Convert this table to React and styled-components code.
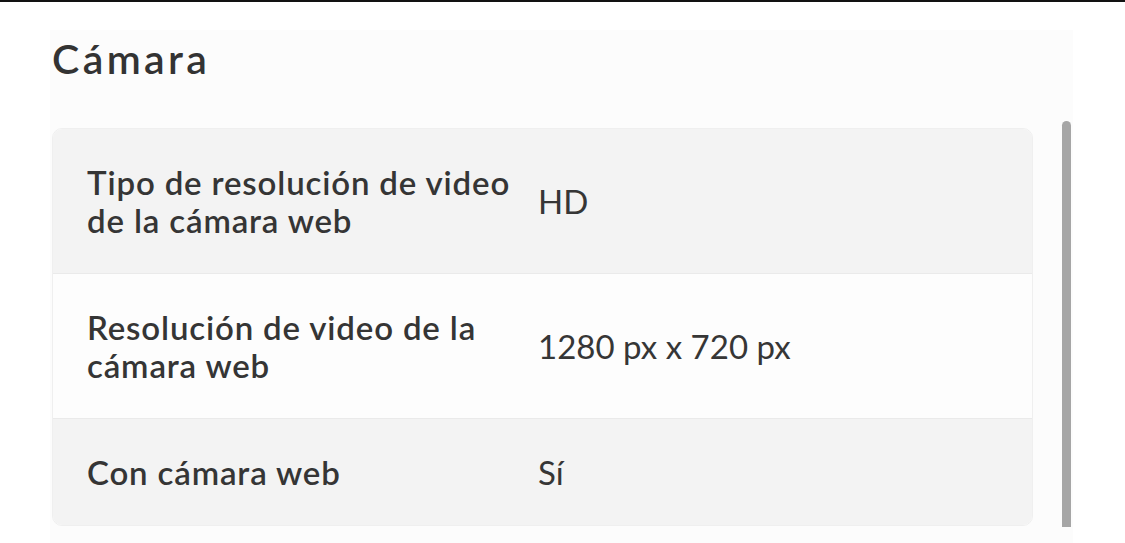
import styled, { createGlobalStyle } from 'styled-components';

const GlobalStyle = createGlobalStyle`
  html, body {
    margin: 0;
    padding: 0;
    background: #ffffff;
    font-family: 'Lato', 'Noto Sans', sans-serif;
    color: #333333;
  }
`;

const TopBar = styled.div`
  height: 2px;
  background: #121212;
`;

const Page = styled.div`
  padding: 28px 0 0 50px;
`;

const Panel = styled.section`
  width: 1023px;
  height: 513px;
  box-sizing: border-box;
  padding: 2px 2px 0 2px;
  background: #fcfcfc;
  display: flex;
  gap: 29px;
`;

const Content = styled.div`
  flex: 1;
  display: flex;
  flex-direction: column;
`;

const Title = styled.h2`
  margin: 3px 0 45px 0;
  font-size: 41px;
  line-height: 48px;
  font-weight: 600;
  letter-spacing: 3.4px;
  color: #333333;
`;

const Table = styled.div`
  border-radius: 10px;
  overflow: hidden;
  border: 1px solid #efefef;
`;

const Row = styled.div`
  display: grid;
  grid-template-columns: 431px 1fr;
  column-gap: 20px;
  align-items: center;
  padding: 34px 0 34px 34px;
  background: ${props => props.$shaded ? '#f3f3f3' : '#fdfdfd'};
  border-top: ${props => props.$first ? 'none' : '1px solid #eaeaea'};
`;

const Label = styled.div`
  font-size: 33px;
  line-height: 38px;
  font-weight: 600;
  letter-spacing: 0.85px;
  color: #353535;
`;

const Value = styled.div`
  font-size: 33px;
  line-height: 38px;
  font-weight: 400;
  color: #363636;
`;

const Scrollbar = styled.div`
  width: 9px;
  height: 406px;
  margin-top: 89px;
  border-radius: 5px 5px 0 0;
  background: #a6a6a6;
`;

const specs = [
  { label: 'Tipo de resolución de video de la cámara web', value: 'HD' },
  { label: 'Resolución de video de la cámara web', value: '1280 px x 720 px' },
  { label: 'Con cámara web', value: 'Sí' },
];

export default function App() {
  return (
    <>
      <GlobalStyle />
      <TopBar />
      <Page>
        <Panel>
          <Content>
            <Title>Cámara</Title>
            <Table>
              {specs.map((row, i) => (
                <Row key={row.label} $shaded={i % 2 === 0} $first={i === 0}>
                  <Label>{row.label}</Label>
                  <Value>{row.value}</Value>
                </Row>
              ))}
            </Table>
          </Content>
          <Scrollbar />
        </Panel>
      </Page>
    </>
  );
}
